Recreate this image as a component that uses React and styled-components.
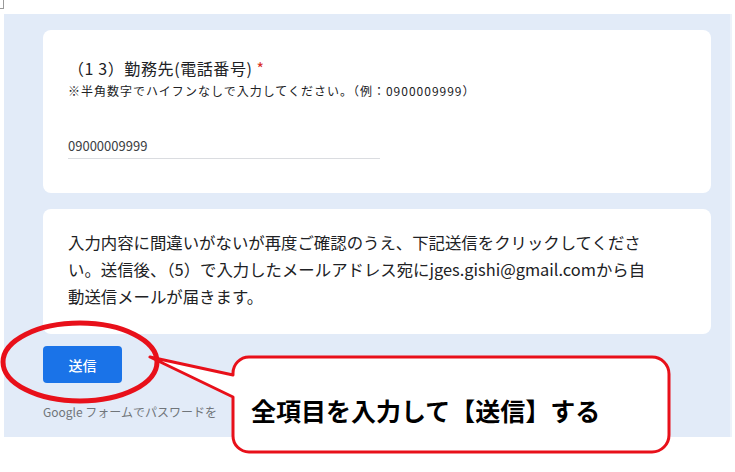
import React from 'react';
import styled, { createGlobalStyle } from 'styled-components';

const GlobalStyle = createGlobalStyle`
  body {
    margin: 0;
    background: #ffffff;
    font-family: "Noto Sans CJK JP", "Noto Sans", sans-serif;
  }
`;

const Page = styled.div`
  position: relative;
  width: 735px;
  height: 472px;
  overflow: hidden;
  background: #ffffff;
`;

const TopStrip = styled.div`
  height: 14px;
`;

const CornerMark = styled.span`
  display: block;
  width: 3px;
  height: 8px;
  border-right: 1px solid #9a9a9a;
  border-bottom: 1px solid #9a9a9a;
`;

const FormArea = styled.div`
  margin-left: 4px;
  width: 728px;
  height: 423px;
  box-sizing: border-box;
  padding: 16px 19px 0 39px;
  background: #e2ebf8;
  border-right: 2px solid #edf2fa;
`;

const Card = styled.div`
  box-sizing: border-box;
  height: ${(props) => props.h}px;
  margin-bottom: 16px;
  padding: ${(props) => props.pad};
  background: #ffffff;
  border-radius: 8px;
`;

const Title = styled.div`
  font-size: 16px;
  line-height: 24px;
  color: #202124;
  letter-spacing: 0.6px;
`;

const Required = styled.span`
  color: #d93025;
  margin-left: 4px;
`;

const Help = styled.div`
  margin-top: 2px;
  font-size: 12px;
  line-height: 18px;
  letter-spacing: 1px;
  color: #202124;
`;

const Input = styled.div`
  margin-top: 36px;
  width: 312px;
  padding-bottom: 2px;
  font-size: 13px;
  line-height: 20px;
  color: #3c4043;
  border-bottom: 1px solid #dadce0;
`;

const Notice = styled.p`
  margin: 0;
  font-size: 16.4px;
  line-height: 27px;
  color: #202124;
  white-space: nowrap;
`;

const SubmitButton = styled.button`
  display: flex;
  align-items: center;
  justify-content: center;
  width: 79px;
  height: 37px;
  margin-top: -4px;
  border: none;
  border-radius: 4px;
  background: #1a73e8;
  color: #ffffff;
  font-family: inherit;
  font-size: 14px;
  font-weight: 500;
`;

const Footer = styled.div`
  margin-top: 20px;
  font-size: 12px;
  line-height: 18px;
  color: #70757a;
  white-space: nowrap;
`;

const Overlay = styled.svg`
  position: absolute;
  left: 0;
  top: 0;
  pointer-events: none;
`;

const CalloutText = styled.div`
  position: absolute;
  left: 251px;
  top: 392px;
  font-size: 25px;
  line-height: 36px;
  font-weight: 700;
  color: #000000;
  white-space: nowrap;
`;

const RED = '#e8101a';

const App = () => {
  return (
    <Page>
      <GlobalStyle />
      <TopStrip>
        <CornerMark />
      </TopStrip>
      <FormArea>
        <Card h={163} pad="26px 25px">
          <Title>
            （1 3）勤務先(電話番号)<Required>*</Required>
          </Title>
          <Help>※半角数字でハイフンなしで入力してください。（例：0900009999）</Help>
          <Input>09000009999</Input>
        </Card>
        <Card h={125} pad="20px 25px">
          <Notice>
            入力内容に間違いがないが再度ご確認のうえ、下記送信をクリックしてくださ
            <br />
            い。送信後、（5）で入力したメールアドレス宛にjges.gishi@gmail.comから自
            <br />
            動送信メールが届きます。
          </Notice>
        </Card>
        <SubmitButton>送信</SubmitButton>
        <Footer>Google フォームでパスワードを</Footer>
      </FormArea>

      <Overlay width="735" height="472" viewBox="0 0 735 472">
        <ellipse cx="80" cy="362" rx="77" ry="39" fill="none" stroke={RED} strokeWidth="5" />
        <path
          d="M 249 357 H 652 A 17 17 0 0 1 669 374 V 435 A 17 17 0 0 1 652 452 H 249 A 16 16 0 0 1 233 436 V 397 L 150 357 L 233 375 V 373 A 16 16 0 0 1 249 357 Z"
          fill="#ffffff"
          stroke={RED}
          strokeWidth="3"
          strokeLinejoin="round"
        />
      </Overlay>
      <CalloutText>全項目を入力して【送信】する</CalloutText>
    </Page>
  );
};

export default App;
